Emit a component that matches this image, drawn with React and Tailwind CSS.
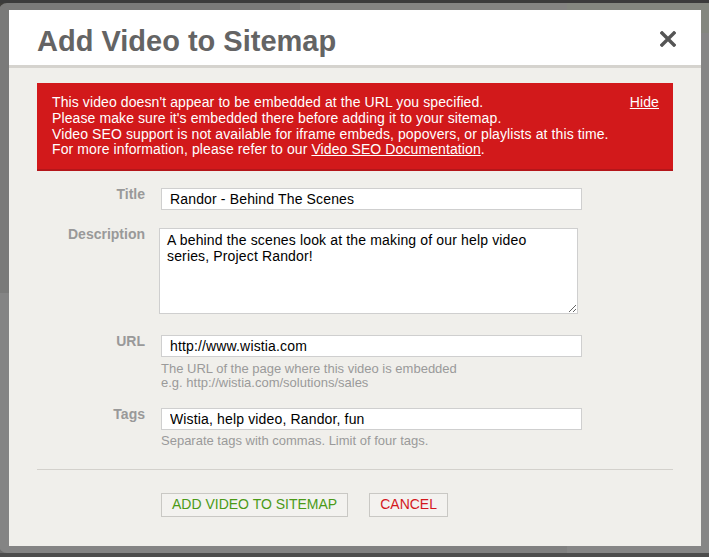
import React from 'react'

const font = { fontFamily: '"Liberation Sans", Arial, Helvetica, sans-serif' }

function Field({ label, children }) {
  return (
    <div className="flex items-start">
      <div className="w-[108px] shrink-0 text-right text-[14px] font-bold leading-[12px] text-[#999999]">
        {label}
      </div>
      <div className="ml-[16px] flex-1">{children}</div>
    </div>
  )
}

function TextInput({ value }) {
  return (
    <input
      type="text"
      readOnly
      value={value}
      className="block h-[22px] w-[421px] border border-[#cfcfcf] bg-white px-[8px] text-[14px] tracking-[0.15px] text-black outline-none"
      style={font}
    />
  )
}

function Backdrop() {
  // dimmed page behind the dialog
  return (
    <div className="absolute inset-0">
      <div className="absolute left-0 top-0 h-[3px] w-full bg-[#3b3b3b]" />
      <div className="absolute left-0 top-[3px] h-[290px] w-[300px] bg-[#3f3e3a]" />
      <div className="absolute left-[300px] top-[3px] h-[60px] w-[267px] bg-[#6f6d64]" />
      <div className="absolute left-[567px] top-[3px] h-[30px] w-[142px] bg-[#6d7c55]" />
      <div className="absolute left-0 top-[293px] h-[260px] w-[300px] bg-[#6e6e6e]" />
      <div className="absolute left-[567px] top-[33px] h-[520px] w-[142px] bg-[#777777]" />
      <div className="absolute left-0 top-[553px] h-[4px] w-full bg-[#4d4d4d]" />
    </div>
  )
}

export default function App() {
  return (
    <div className="relative h-[557px] w-[709px] overflow-hidden bg-[#5a5a5a]" style={font}>
      <Backdrop />

      <div className="absolute left-[-1px] top-[3px] h-[550px] w-[716px] rounded-[8px] bg-[#8a8a8a]/80" />

      <div className="absolute left-[9px] top-[10px] flex h-[536px] w-[692px] flex-col bg-[#f0efeb]">
        <div className="flex h-[58px] shrink-0 items-start justify-between border-b-[3px] border-[#d5d3ce] bg-white pl-[28px] pr-[25px]">
          <h1 className="pt-[17px] text-[29px] font-bold leading-none text-[#646464]">Add Video to Sitemap</h1>
          <button aria-label="Close" className="mt-[21px]">
            <svg width="16" height="16" viewBox="0 0 16 16">
              <path d="M2 2 L14 14 M14 2 L2 14" stroke="#555555" strokeWidth="3.4" strokeLinecap="square" />
            </svg>
          </button>
        </div>

        <div className="px-[28px] pt-[15px]">
          <div className="flex justify-between border-b-2 border-[#b4161a] bg-[#d2191b] pb-[11px] pl-[15px] pr-[14px] pt-[12px] text-[14px] leading-[15.75px] tracking-[0.1px] text-white">
            <div>
              <p>This video doesn't appear to be embedded at the URL you specified.</p>
              <p>Please make sure it's embedded there before adding it to your sitemap.</p>
              <p>Video SEO support is not available for iframe embeds, popovers, or playlists at this time.</p>
              <p>
                For more information, please refer to our <a className="underline">Video SEO Documentation</a>.
              </p>
            </div>
            <a className="underline">Hide</a>
          </div>

          <div className="mt-[17px]">
            <Field label="Title">
              <TextInput value="Randor - Behind The Scenes" />
            </Field>
          </div>

          <div className="mt-[18px]">
            <Field label="Description">
              <textarea
                readOnly
                value="A behind the scenes look at the making of our help video series, Project Randor!"
                className="-ml-[2px] block h-[86px] w-[419px] resize border border-[#cfcfcf] bg-white px-[7px] pt-[3px] text-[14px] leading-[16px] tracking-[0.15px] text-black outline-none"
                style={font}
              />
            </Field>
          </div>

          <div className="mt-[21px]">
            <Field label="URL">
              <TextInput value="http://www.wistia.com" />
              <p className="mt-[5px] text-[13px] leading-[14.3px] text-[#9a9a9a]">
                The URL of the page where this video is embedded
                <br />
                e.g. http://wistia.com/solutions/sales
              </p>
            </Field>
          </div>

          <div className="mt-[17px]">
            <Field label="Tags">
              <TextInput value="Wistia, help video, Randor, fun" />
              <p className="mt-[4px] text-[13px] leading-[14px] text-[#9a9a9a]">
                Separate tags with commas. Limit of four tags.
              </p>
            </Field>
          </div>

          <div className="mt-[21px] h-px bg-[#d3d1cc]" />

          <div className="mt-[23px] flex gap-[21px] pl-[124px]">
            <button className="h-[24px] border border-[#c9c8c4] bg-[#f3f2ef] px-[10px] text-[14px] text-[#4b9a17]">
              ADD VIDEO TO SITEMAP
            </button>
            <button className="h-[24px] border border-[#c9c8c4] bg-[#f3f2ef] px-[10px] text-[14px] text-[#d4181c]">
              CANCEL
            </button>
          </div>
        </div>
      </div>
    </div>
  )
}
